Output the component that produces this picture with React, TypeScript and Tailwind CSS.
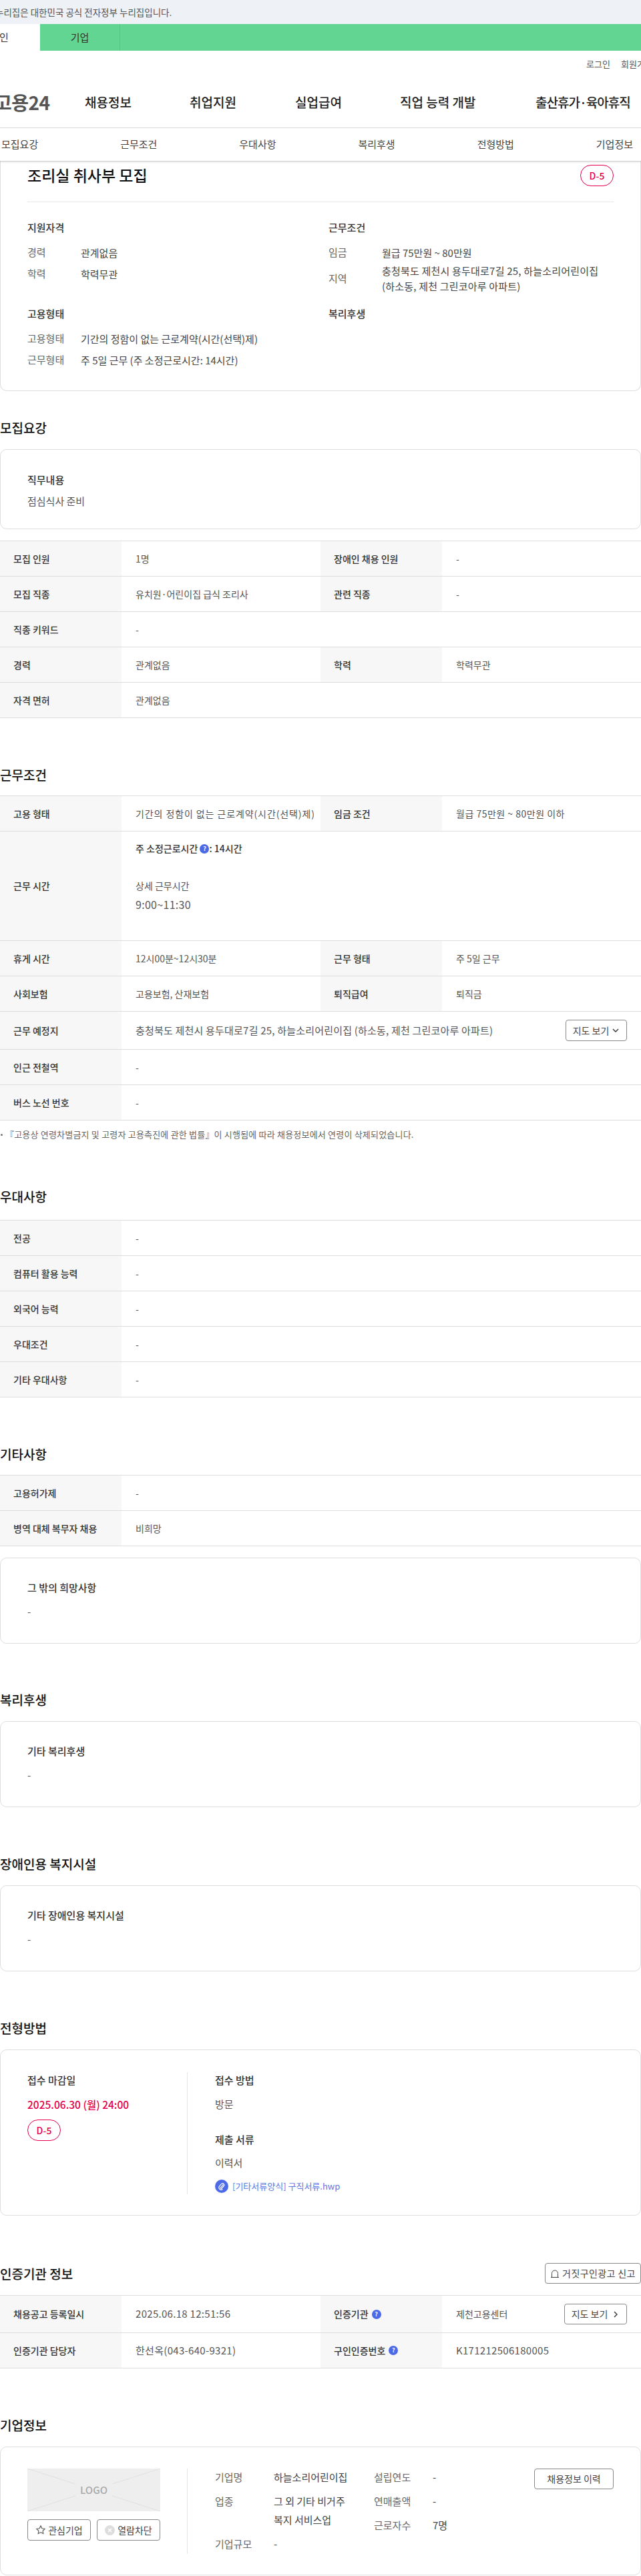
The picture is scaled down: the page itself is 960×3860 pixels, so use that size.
import type { ReactNode } from "react";

const KR = "font-['Noto_Sans_CJK_KR','Noto_Sans',sans-serif]";

// Help badge used next to table labels
function Help() {
  return (
    <span className="inline-flex h-[14px] w-[14px] items-center justify-center rounded-full bg-[#4c6ae8] text-[9px] font-bold text-white">
      ?
    </span>
  );
}

function Dday() {
  return (
    <span className="flex h-[32px] w-[50px] items-center justify-center rounded-[16px] border border-[#e6004d] text-[14px] font-medium text-[#e6004d]">
      D-5
    </span>
  );
}

function Heading({ children, className = "" }: { children: ReactNode; className?: string }) {
  return <h2 className={"text-[19px] leading-[28px] font-medium text-[#111] " + className}>{children}</h2>;
}

function Label({ children }: { children: ReactNode }) {
  return (
    <div className="flex w-[182px] shrink-0 items-center gap-[5px] bg-[#f7f7f7] pl-[20px] text-[14px] font-medium text-[#333]">
      {children}
    </div>
  );
}

function Value({ children, className = "" }: { children: ReactNode; className?: string }) {
  return <div className={"flex items-center pl-[21px] text-[14px] text-[#555] " + className}>{children}</div>;
}

// Digits and brackets run wider in the reference than in the installed font
function Wide({ children }: { children: ReactNode }) {
  return <span className="text-[15px] tracking-[0.3px]">{children}</span>;
}

type Cell = { label: ReactNode; value: ReactNode };

// Table row, one or two label/value pairs
function Row({ cells, h = "h-[53px]" }: { cells: Cell[]; h?: string }) {
  return (
    <div className={"flex border-b border-[#ddd] " + h}>
      <Label>{cells[0].label}</Label>
      <Value className={cells.length > 1 ? "w-[298px]" : "flex-1"}>{cells[0].value}</Value>
      {cells[1] && (
        <>
          <Label>{cells[1].label}</Label>
          <Value className="flex-1">{cells[1].value}</Value>
        </>
      )}
    </div>
  );
}

function Table({ children }: { children: ReactNode }) {
  return <div className="border-t border-[#ddd]">{children}</div>;
}

function Card({ children, className = "" }: { children: ReactNode; className?: string }) {
  return <div className={"rounded-[10px] border border-[#ddd] bg-white " + className}>{children}</div>;
}

function NoteCard({ title, className = "" }: { title: string; className?: string }) {
  return (
    <Card className={"h-[129px] px-[40px] pt-[33px] " + className}>
      <div className="text-[15px] leading-[22px] font-medium text-[#333]">{title}</div>
      <div className="mt-[14px] text-[15px] leading-[22px] text-[#555]">-</div>
    </Card>
  );
}

function Pair({ k, v, tall }: { k: string; v: ReactNode; tall?: boolean }) {
  return (
    <div className={"flex items-center text-[15px] " + (tall ? "h-[46px]" : "h-[32px]")}>
      <span className="w-[80px] shrink-0 text-[#666]">{k}</span>
      <span className="leading-[23px] text-[#444]">{v}</span>
    </div>
  );
}

function OutlineButton({ children, className = "" }: { children: ReactNode; className?: string }) {
  return (
    <button className={"flex items-center justify-center rounded-[4px] border border-[#888] bg-white text-[14px] text-[#444] " + className}>
      {children}
    </button>
  );
}

function Chevron({ dir }: { dir: "down" | "right" }) {
  return (
    <svg width="12" height="12" viewBox="0 0 12 12" fill="none" stroke="#333" strokeWidth="1.4">
      {dir === "down" ? <path d="M2 4l4 4 4-4" /> : <path d="M4 2l4 4-4 4" />}
    </svg>
  );
}

function CompanyField({ k, children, w = "w-[88px]" }: { k: string; children: ReactNode; w?: string }) {
  return (
    <div className="flex text-[15px] leading-[36px]">
      <span className={"shrink-0 text-[#666] " + w}>{k}</span>
      <span className="text-[#444]">{children}</span>
    </div>
  );
}

const navItems = ["채용정보", "취업지원", "실업급여", "직업 능력 개발", "출산휴가·육아휴직"];
const subItems = ["모집요강", "근무조건", "우대사항", "복리후생", "전형방법", "기업정보"];

export default function App() {
  return (
    <div className={"h-[3860px] w-[960px] overflow-hidden bg-white " + KR}>
      <div className="flex h-[36px] items-center bg-[#eef1f6] text-[13.5px] text-[#555]">
        <span className="-ml-[7px] whitespace-nowrap">누리집은 대한민국 공식 전자정부 누리집입니다.</span>
      </div>

      <div className="flex h-[40px] bg-[#62d592] text-[15px] text-[#333]">
        <div className="flex w-[60px] items-center bg-white"><span className="-ml-[1px]">인</span></div>
        <div className="flex w-[120px] items-center justify-center border-r border-[#55c585]">기업</div>
      </div>

      <div className="flex h-[39px] items-center justify-end gap-[16px] text-[13px] text-[#555]">
        <span>로그인</span>
        <span className="-mr-[10px] w-[40px] whitespace-nowrap">회원가입</span>
      </div>

      <div className="flex h-[77px] items-center border-b border-[#e5e5e5]">
        <span className="-ml-[8px] w-[135px] shrink-0 text-[28px] font-bold tracking-[-0.5px] text-[#555]">고용24</span>
        <nav className="flex text-[19px] font-medium text-[#222]">
          {navItems.map((n, i) => (
            <span
              key={n}
              className={
                i === 0 ? "w-[157px]" : i === 1 ? "w-[158px]" : i === 2 ? "w-[157px]" : i === 3 ? "w-[203px]" : "whitespace-nowrap tracking-[-1px]"
              }
            >
              {n}
            </span>
          ))}
        </nav>
      </div>

      <div className="relative z-10 flex h-[49px] items-center justify-between bg-white pr-[12px] pl-[2px] text-[15px] text-[#444] shadow-[0_1px_3px_rgba(0,0,0,0.25)]">
        {subItems.map((s) => (
          <span key={s}>{s}</span>
        ))}
      </div>

      <div className="h-[345px] rounded-b-[10px] border-x border-b border-[#ddd] px-[40px]">
        <div className="flex h-[62px] items-start justify-between border-b border-[#e8e8e8] pt-[6px]">
          <h1 className="text-[23px] leading-[30px] font-medium text-[#111]">조리실 취사부 모집</h1>
          <Dday />
        </div>
        <div className="mt-[26px] flex">
          <div className="w-[451px]">
            <div className="text-[15px] leading-[24px] font-medium text-[#333]">지원자격</div>
            <div className="mt-[9px]">
              <Pair k="경력" v="관계없음" />
              <Pair k="학력" v="학력무관" />
            </div>
            <div className="mt-[32px] text-[15px] leading-[24px] font-medium text-[#333]">고용형태</div>
            <div className="mt-[9px]">
              <Pair k="고용형태" v="기간의 정함이 없는 근로계약(시간(선택)제)" />
              <Pair k="근무형태" v="주 5일 근무 (주 소정근로시간: 14시간)" />
            </div>
          </div>
          <div className="flex-1">
            <div className="text-[15px] leading-[24px] font-medium text-[#333]">근무조건</div>
            <div className="mt-[9px]">
              <Pair k="임금" v="월급 75만원 ~ 80만원" />
              <Pair
                tall
                k="지역"
                v={
                  <span className="tracking-[0.2px]">
                    충청북도 제천시 용두대로7길 25, 하늘소리어린이집
                    <br />
                    (하소동, 제천 그린코아루 아파트)
                  </span>
                }
              />
            </div>
            <div className="mt-[18px] text-[15px] leading-[24px] font-medium text-[#333]">복리후생</div>
          </div>
        </div>
      </div>

      <Heading className="mt-[41px]">모집요강</Heading>
      <Card className="mt-[18px] h-[120px] px-[40px] pt-[34px]">
        <div className="text-[15px] leading-[22px] font-medium text-[#333]">직무내용</div>
        <div className="mt-[10px] text-[15px] leading-[22px] text-[#555]">점심식사 준비</div>
      </Card>

      <div className="mt-[17px]">
        <Table>
          <Row cells={[{ label: "모집 인원", value: "1명" }, { label: "장애인 채용 인원", value: "-" }]} />
          <Row cells={[{ label: "모집 직종", value: "유치원·어린이집 급식 조리사" }, { label: "관련 직종", value: "-" }]} />
          <Row cells={[{ label: "직종 키워드", value: "-" }]} />
          <Row cells={[{ label: "경력", value: "관계없음" }, { label: "학력", value: "학력무관" }]} />
          <Row cells={[{ label: "자격 면허", value: "관계없음" }]} />
        </Table>
      </div>

      <Heading className="mt-[71px]">근무조건</Heading>
      <div className="mt-[17px]">
        <Table>
          <Row
            cells={[
              { label: "고용 형태", value: <span className="tracking-[0.9px]">기간의 정함이 없는 근로계약(시간(선택)제)</span> },
              { label: "임금 조건", value: <span className="tracking-[0.5px]">월급 75만원 ~ 80만원 이하</span> },
            ]}
          />
          <Row
            h="h-[164px]"
            cells={[
              {
                label: "근무 시간",
                value: (
                  <div className="flex flex-col pb-[28px] text-[14px]">
                    <div className="flex items-center font-medium text-[#333]">
                      주 소정근로시간&nbsp;<Help />
                      <span>: 14시간</span>
                    </div>
                    <div className="mt-[34px] leading-[22px]">상세 근무시간</div>
                    <div className="mt-[6px] text-[16px] leading-[22px] tracking-[0.3px]">9:00~11:30</div>
                  </div>
                ),
              },
            ]}
          />
          <Row cells={[{ label: "휴게 시간", value: "12시00분~12시30분" }, { label: "근무 형태", value: "주 5일 근무" }]} />
          <Row cells={[{ label: "사회보험", value: "고용보험, 산재보험" }, { label: "퇴직급여", value: "퇴직금" }]} />
          <Row
            h="h-[57px]"
            cells={[
              {
                label: "근무 예정지",
                value: (
                  <div className="flex w-full items-center justify-between pr-[21px] text-[15px] tracking-[0.2px]">
                    <span>충청북도 제천시 용두대로7길 25, 하늘소리어린이집 (하소동, 제천 그린코아루 아파트)</span>
                    <OutlineButton className="h-[32px] w-[92px] gap-[4px] tracking-normal">
                      지도 보기 <Chevron dir="down" />
                    </OutlineButton>
                  </div>
                ),
              },
            ]}
          />
          <Row cells={[{ label: "인근 전철역", value: "-" }]} />
          <Row cells={[{ label: "버스 노선 번호", value: "-" }]} />
        </Table>
      </div>
      <p className="mt-[11px] flex items-center gap-[4px] pl-[1px] text-[13px] leading-[20px] tracking-[0.2px] text-[#666]">
        <span className="h-[3px] w-[3px] rounded-full bg-[#777]" />
        『고용상 연령차별금지 및 고령자 고용촉진에 관한 법률』이 시행됨에 따라 채용정보에서 연령이 삭제되었습니다.
      </p>

      <Heading className="mt-[69px]">우대사항</Heading>
      <div className="mt-[21px]">
        <Table>
          <Row cells={[{ label: "전공", value: "-" }]} />
          <Row cells={[{ label: "컴퓨터 활용 능력", value: "-" }]} />
          <Row cells={[{ label: "외국어 능력", value: "-" }]} />
          <Row cells={[{ label: "우대조건", value: "-" }]} />
          <Row cells={[{ label: "기타 우대사항", value: "-" }]} />
        </Table>
      </div>

      <Heading className="mt-[71px]">기타사항</Heading>
      <div className="mt-[17px]">
        <Table>
          <Row cells={[{ label: "고용허가제", value: "-" }]} />
          <Row cells={[{ label: "병역 대체 복무자 채용", value: "비희망" }]} />
        </Table>
      </div>
      <NoteCard title="그 밖의 희망사항" className="mt-[17px]" />

      <Heading className="mt-[70px]">복리후생</Heading>
      <NoteCard title="기타 복리후생" className="mt-[18px]" />

      <Heading className="mt-[71px]">장애인용 복지시설</Heading>
      <NoteCard title="기타 장애인용 복지시설" className="mt-[18px]" />

      <Heading className="mt-[71px]">전형방법</Heading>
      <Card className="mt-[18px] flex h-[249px] px-[40px] pt-[33px]">
        <div className="w-[239px] shrink-0">
          <div className="text-[15px] leading-[24px] font-medium text-[#333]">접수 마감일</div>
          <div className="mt-[12px] text-[15.5px] leading-[24px] font-medium text-[#e6004d]">2025.06.30 (월) 24:00</div>
          <div className="mt-[11px]"><Dday /></div>
        </div>
        <div className="h-[183px] border-l border-[#e5e5e5] pl-[41px]">
          <div className="text-[15px] leading-[24px] font-medium text-[#333]">접수 방법</div>
          <div className="mt-[12px] text-[15px] leading-[24px] text-[#555]">방문</div>
          <div className="mt-[29px] text-[15px] leading-[24px] font-medium text-[#333]">제출 서류</div>
          <div className="mt-[11px] text-[15px] leading-[24px] text-[#555]">이력서</div>
          <div className="mt-[11px] flex items-center gap-[6px] text-[13px] leading-[24px] text-[#5b78e8]">
            <span className="flex h-[20px] w-[20px] items-center justify-center rounded-full bg-[#4c6ae8]">
              <svg width="14" height="14" viewBox="0 0 14 14" fill="none" stroke="#fff" strokeWidth="1.2">
                <path d="M9.5 4.5L5.6 8.6a1 1 0 0 0 1.5 1.4l3.2-3.5a2.4 2.4 0 0 0-3.4-3.3L3.6 6.9a3.4 3.4 0 0 0 4.8 4.7" />
              </svg>
            </span>
            [기타서류양식] 구직서류.hwp
          </div>
        </div>
      </Card>

      <div className="mt-[71px] flex items-center justify-between">
        <Heading>인증기관 정보</Heading>
        <OutlineButton className="h-[31px] w-[144px] gap-[4px] tracking-[0.4px] whitespace-nowrap">
          <svg width="14" height="14" viewBox="0 0 14 14" fill="none" stroke="#444" strokeWidth="1">
            <path d="M2.5 12V6.5a4.5 4.5 0 0 1 9 0V12M1 12.5h12" />
          </svg>
          거짓구인광고 신고
        </OutlineButton>
      </div>
      <div className="mt-[17px]">
        <Table>
          <Row
            h="h-[56px]"
            cells={[
              { label: "채용공고 등록일시", value: <Wide>2025.06.18 12:51:56</Wide> },
              {
                label: <>인증기관 <Help /></>,
                value: (
                  <div className="flex w-full items-center justify-between pr-[21px]">
                    <span>제천고용센터</span>
                    <OutlineButton className="h-[31px] w-[94px] gap-[6px]">
                      지도 보기 <Chevron dir="right" />
                    </OutlineButton>
                  </div>
                ),
              },
            ]}
          />
          <Row
            cells={[
              { label: "인증기관 담당자", value: <Wide>한선옥(043-640-9321)</Wide> },
              { label: <>구인인증번호 <Help /></>, value: <Wide>K171212506180005</Wide> },
            ]}
          />
        </Table>
      </div>

      <Heading className="mt-[71px]">기업정보</Heading>
      <Card className="mt-[18px] flex h-[193px] px-[40px] pt-[32px]">
        <div className="w-[239px] shrink-0">
          <div className="relative flex h-[64px] w-[199px] items-center justify-center overflow-hidden bg-[#eeeeee]">
            <svg className="absolute inset-0 h-full w-full" viewBox="0 0 199 64" preserveAspectRatio="none" stroke="#e0e0e0" strokeWidth="1">
              <line x1="0" y1="0" x2="199" y2="64" />
              <line x1="199" y1="0" x2="0" y2="64" />
            </svg>
            <span className="relative bg-[#eeeeee] px-[7px] text-[15px] font-medium text-[#aaa]">LOGO</span>
          </div>
          <div className="mt-[12px] flex gap-[9px]">
            <OutlineButton className="h-[32px] w-[95px] gap-[3px]">
              <svg width="16" height="16" viewBox="0 0 16 16" fill="none" stroke="#555" strokeWidth="1.1">
                <path d="M8 1.8l1.9 3.9 4.3.6-3.1 3 .7 4.3L8 11.6l-3.8 2 .7-4.3-3.1-3 4.3-.6z" />
              </svg>
              관심기업
            </OutlineButton>
            <OutlineButton className="h-[32px] w-[95px] gap-[4px]">
              <svg width="15" height="15" viewBox="0 0 15 15">
                <circle cx="7.5" cy="7.5" r="7.5" fill="#ddd" />
                <path d="M5 5l5 5M10 5l-5 5" stroke="#fff" strokeWidth="1.4" />
              </svg>
              열람차단
            </OutlineButton>
          </div>
        </div>
        <div className="flex h-[128px] flex-1 border-l border-[#e5e5e5] pl-[41px]">
          <div className="-mt-[5px] w-[238px] shrink-0">
            <CompanyField k="기업명">하늘소리어린이집</CompanyField>
            <CompanyField k="업종">
              <span className="block w-[120px] pt-[4px] pb-[4px] leading-[28px]">그 외 기타 비거주 복지 서비스업</span>
            </CompanyField>
            <CompanyField k="기업규모">-</CompanyField>
          </div>
          <div className="-mt-[5px] w-[240px] shrink-0">
            <CompanyField k="설립연도">-</CompanyField>
            <CompanyField k="연매출액">-</CompanyField>
            <CompanyField k="근로자수">7명</CompanyField>
          </div>
          <OutlineButton className="h-[31px] w-[119px] shrink-0">채용정보 이력</OutlineButton>
        </div>
      </Card>
    </div>
  );
}
